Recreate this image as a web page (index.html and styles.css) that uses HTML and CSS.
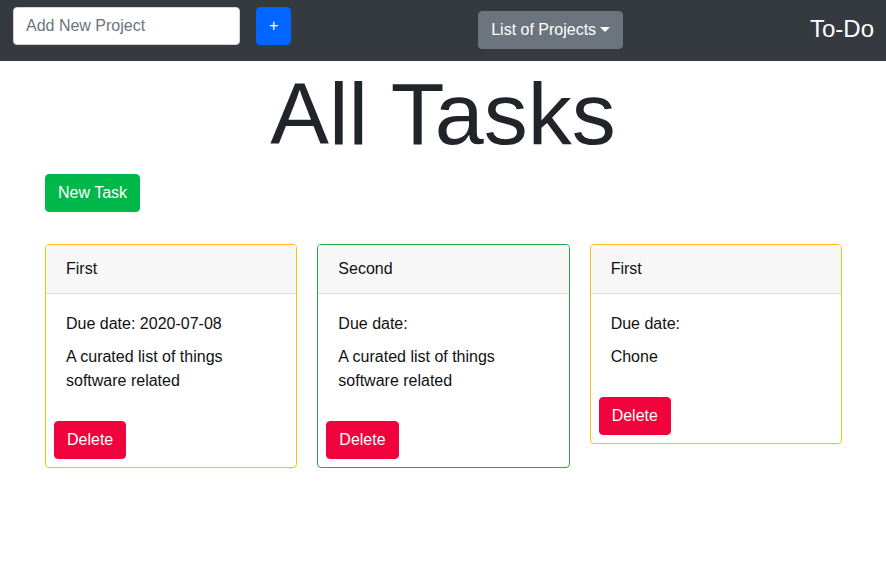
FILE: index.html
```html
<!DOCTYPE html>
<html>
<head>
<meta charset="utf-8">
<link rel="stylesheet" href="styles.css">
</head>
<body>
<nav class="navbar">
  <div class="nav-left">
    <input class="project-input" type="text" placeholder="Add New Project">
    <button class="btn btn-primary">+</button>
  </div>
  <button class="btn btn-secondary dropdown">List of Projects<span class="caret"></span></button>
  <div class="brand">To-Do</div>
</nav>
<h1 class="title">All Tasks</h1>
<main class="container">
  <button class="btn btn-success">New Task</button>
  <div class="cards">
    <div class="card card-warning">
      <div class="card-header">First</div>
      <div class="card-body">
        <p>Due date: 2020-07-08</p>
        <p>A curated list of things software related</p>
      </div>
      <div class="card-actions"><button class="btn btn-danger">Delete</button></div>
    </div>
    <div class="card card-success">
      <div class="card-header">Second</div>
      <div class="card-body">
        <p>Due date:</p>
        <p>A curated list of things software related</p>
      </div>
      <div class="card-actions"><button class="btn btn-danger">Delete</button></div>
    </div>
    <div class="card card-warning">
      <div class="card-header">First</div>
      <div class="card-body">
        <p>Due date:</p>
        <p>Chone</p>
      </div>
      <div class="card-actions"><button class="btn btn-danger">Delete</button></div>
    </div>
  </div>
</main>
</body>
</html>
```
FILE: styles.css
```css
* { box-sizing: border-box; }
body {
  margin: 0;
  font-family: "Liberation Sans", Arial, sans-serif;
  font-size: 16px;
  line-height: 24px;
  color: #212529;
  background: #fff;
}
.navbar {
  height: 61px;
  background: #343a40;
  display: flex;
  justify-content: space-between;
  align-items: flex-start;
  padding: 0 12px 0 13px;
}
.nav-left {
  display: flex;
  gap: 16px;
  margin-top: 7px;
}
.project-input {
  width: 227px;
  height: 38px;
  padding: 6px 12px;
  border: 1px solid #ced4da;
  border-radius: 4px;
  font-family: inherit;
  font-size: 16px;
  color: #495057;
  background: #fff;
}
.project-input::placeholder { color: #6c757d; }
.btn {
  display: inline-block;
  height: 38px;
  padding: 6px 12px;
  border: 1px solid transparent;
  border-radius: 4px;
  font-family: inherit;
  font-size: 16px;
  line-height: 24px;
  color: #fff;
  cursor: pointer;
}
.btn-primary { background: #0066ff; border-color: #0066ff; }
.btn-secondary { background: #6c757d; border-color: #6c757d; }
.btn-success { background: #00b74a; border-color: #00b74a; }
.btn-danger { background: #f0033d; border-color: #f0033d; }
.dropdown { margin-top: 11px; }
.caret {
  display: inline-block;
  margin-left: 4px;
  vertical-align: 3px;
  border-top: 5px solid #fff;
  border-left: 5px solid transparent;
  border-right: 5px solid transparent;
}
.brand {
  margin-top: 14px;
  font-size: 24px;
  line-height: 30px;
  color: #fff;
}
.title {
  margin: 0 0 7px;
  text-align: center;
  font-size: 88px;
  line-height: 106px;
  font-weight: 400;
}
.container {
  width: 797px;
  margin: 0 0 0 45px;
}
.cards {
  margin-top: 32px;
  display: flex;
  align-items: flex-start;
  gap: 20px;
}
.card {
  flex: 1;
  border: 1px solid;
  border-radius: 4px;
  overflow: hidden;
  color: #111;
}
.card-warning { border-color: #ffc107; }
.card-success { border-color: #28a745; }
.card-header {
  padding: 12px 20px;
  background: #f7f7f7;
  border-bottom: 1px solid #dcdcdc;
}
.card-body {
  padding: 18px 20px 0;
}
.card-body p {
  margin: 0 0 9px;
}
.card-actions {
  padding: 19px 8px 8px;
}
```
